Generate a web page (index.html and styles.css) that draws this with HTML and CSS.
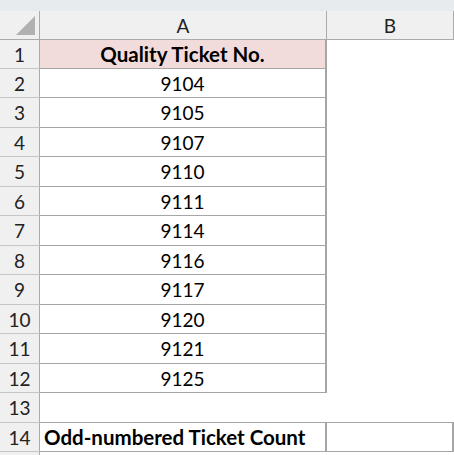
FILE: index.html
```html
<!DOCTYPE html>
<html lang="en">
<head>
    <meta charset="UTF-8">
    <title>Quality Tickets</title>
    <link rel="stylesheet" href="styles.css">
</head>
<body>
    <div class="ribbon-edge"></div>
    <div class="sheet">
        <!-- column headers -->
        <div class="corner"><span class="corner-tri"></span></div>
        <div class="col-head">A</div>
        <div class="col-head">B</div>

        <div class="row-head">1</div>
        <div class="cell boxed title">Quality Ticket No.</div>
        <div class="cell"></div>

        <div class="row-head">2</div>
        <div class="cell boxed">9104</div>
        <div class="cell"></div>

        <div class="row-head">3</div>
        <div class="cell boxed">9105</div>
        <div class="cell"></div>

        <div class="row-head">4</div>
        <div class="cell boxed">9107</div>
        <div class="cell"></div>

        <div class="row-head">5</div>
        <div class="cell boxed">9110</div>
        <div class="cell"></div>

        <div class="row-head">6</div>
        <div class="cell boxed">9111</div>
        <div class="cell"></div>

        <div class="row-head">7</div>
        <div class="cell boxed">9114</div>
        <div class="cell"></div>

        <div class="row-head">8</div>
        <div class="cell boxed">9116</div>
        <div class="cell"></div>

        <div class="row-head">9</div>
        <div class="cell boxed">9117</div>
        <div class="cell"></div>

        <div class="row-head">10</div>
        <div class="cell boxed">9120</div>
        <div class="cell"></div>

        <div class="row-head">11</div>
        <div class="cell boxed">9121</div>
        <div class="cell"></div>

        <div class="row-head">12</div>
        <div class="cell boxed">9125</div>
        <div class="cell"></div>

        <div class="row-head">13</div>
        <div class="cell"></div>
        <div class="cell"></div>

        <div class="row-head">14</div>
        <div class="cell boxed label">Odd-numbered Ticket Count</div>
        <div class="cell boxed result"></div>

        <div class="row-head"></div>
        <div class="cell"></div>
        <div class="cell"></div>
    </div>
</body>
</html>
```

FILE: styles.css
```css
body {
    margin: 0;
    width: 454px;
    height: 455px;
    overflow: hidden;
    background: #fff;
    font-family: Lato, "Liberation Sans", sans-serif;
    font-size: 19px;
    color: #000;
}
.ribbon-edge {
    height: 11px;
    background: #e8ebee;
}
.sheet {
    display: grid;
    grid-template-columns: 40px 287px 127px;
    grid-template-rows: 29px 29px 29px 30px 29px 30px 29px 30px 29px 30px 29px 30px 29px 30px 29px 20px;
}
.corner, .col-head, .row-head {
    background: #f0f0f0;
    color: #222;
    box-sizing: border-box;
}
.corner {
    display: flex;
    align-items: flex-end;
    justify-content: flex-end;
    padding: 0 4px 4px 0;
    border-right: 1px solid #ababab;
    border-bottom: 1px solid #ababab;
}
.corner-tri {
    width: 0;
    height: 0;
    border-left: 19px solid transparent;
    border-bottom: 19px solid #b1b1b1;
}
.col-head {
    display: flex;
    align-items: center;
    justify-content: center;
    border-right: 1px solid #ababab;
    border-bottom: 1px solid #ababab;
}
.row-head {
    display: flex;
    align-items: center;
    justify-content: center;
    border-right: 1px solid #ababab;
    border-bottom: 1px solid #c6c6c6;
}
.cell {
    display: flex;
    align-items: center;
    justify-content: center;
    box-sizing: border-box;
}
.boxed {
    border-right: 2px solid #a6a6a6;
    border-bottom: 1px solid #a6a6a6;
}
.title {
    background: #f2dcdb;
    font-weight: bold;
    font-size: 20.5px;
}
.label {
    justify-content: flex-start;
    padding-left: 4px;
    font-weight: bold;
    font-size: 20.5px;
    border-top: 1px solid #a6a6a6;
    margin-top: -1px;
}
.result {
    border-top: 1px solid #a6a6a6;
    margin-top: -1px;
}
```
